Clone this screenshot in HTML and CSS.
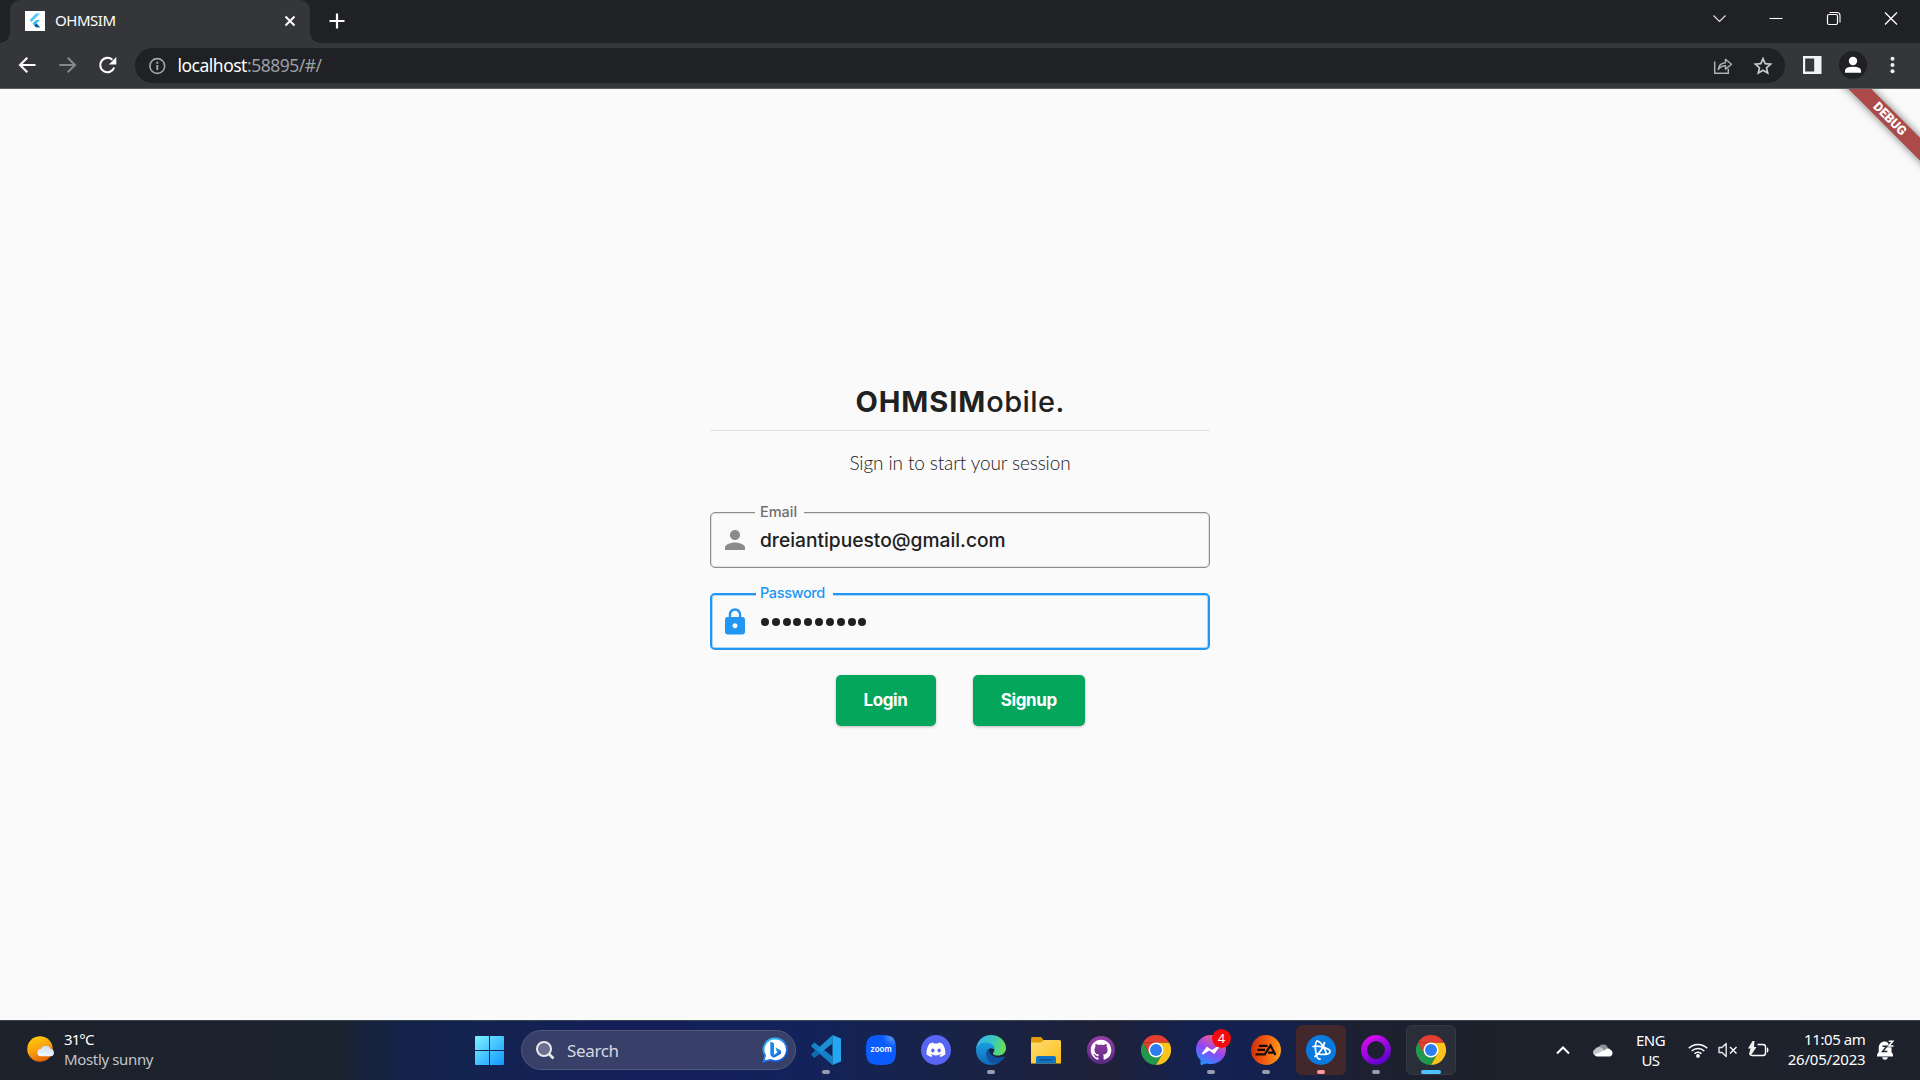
FILE: index.html
```html
<!DOCTYPE html>
<html lang="en">
<head>
<meta charset="utf-8">
<title>OHMSIM</title>
<link rel="stylesheet" href="styles.css">
</head>
<body>
<header class="tabstrip">
  <div class="tab">
    <svg class="favicon" width="20" height="20" viewBox="0 0 20 20"><rect width="20" height="20" fill="#fff"/><path d="M11 2.600h4L6.600 11 4.600 9z" fill="#54c5f8"/><path d="M11 9h4l-3.600 3.600L15 16.300h-4L7.400 12.600z" fill="#40b8f2"/><path d="M9.400 14.600l2-2L15 16.300h-4z" fill="#01579b"/></svg>
    <span class="tab-title">OHMSIM</span>
    <svg class="tab-close" width="12" height="12" viewBox="0 0 12 12"><path d="M1.500 1.500l9 9m0-9l-9 9" stroke="#fff" stroke-width="2"/></svg>
  </div>
  <svg class="new-tab" width="16" height="16" viewBox="0 0 16 16"><path d="M8 .5v15M.5 8h15" stroke="#fff" stroke-width="2.200"/></svg>
  <div class="window-buttons">
    <svg width="57" height="36" viewBox="0 0 57 36"><path d="M21.500 15.500l6 6 6-6" fill="none" stroke="#e8e8e8" stroke-width="1.100"/></svg>
    <svg width="57" height="36" viewBox="0 0 57 36"><path d="M20.500 18.500h13" stroke="#fff" stroke-width="1.100"/></svg>
    <svg width="57" height="36" viewBox="0 0 57 36"><rect x="21.500" y="14.500" width="10" height="10" rx="1.500" fill="none" stroke="#fff" stroke-width="1.200"/><path d="M23.500 12.500h7.500q3 0 3 3V22.500" fill="none" stroke="#fff" stroke-width="1.100"/></svg>
    <svg width="57" height="36" viewBox="0 0 57 36"><path d="M22 12.500l12 12m0-12l-12 12" stroke="#fff" stroke-width="1.300"/></svg>
  </div>
</header>
<nav class="toolbar">
  <svg width="40" height="40" viewBox="0 0 40 40"><path d="M28.500 20H13M20.300 12.800L13 20l7.300 7.200" fill="none" stroke="#fff" stroke-width="2.100"/></svg>
  <svg width="40" height="40" viewBox="0 0 40 40"><path d="M12.500 20H28M20.700 12.800L28 20l-7.300 7.200" fill="none" stroke="#87888b" stroke-width="2.100"/></svg>
  <svg width="40" height="40" viewBox="0 0 40 40"><path d="M27.200 22.500A7.200 7.200 0 1 1 25.400 14.800" fill="none" stroke="#fff" stroke-width="2.100"/><path d="M29.300 12v7.400h-7.400z" fill="#fff"/></svg>
  <div class="omnibox">
    <svg width="18" height="18" viewBox="0 0 18 18"><circle cx="9.300" cy="9" r="7.400" fill="none" stroke="#a5a7aa" stroke-width="1.600"/><path d="M9.300 8v5M9.300 4.700v2" stroke="#a5a7aa" stroke-width="1.900"/></svg>
    <span class="url">localhost<span class="url-rest">:58895/#/</span></span>
    <svg class="share" width="20" height="18" viewBox="0 0 20 18"><path d="M1.700 4.500v11.800h13.600v-4.500" fill="none" stroke="#aeb0b3" stroke-width="1.500"/><path d="M5.200 12.500c.5-4.200 2.800-6.500 7.300-6.800V2.200l6 5-6 4.900V8.800c-3.400 0-5.300 1.200-7.300 3.700z" fill="none" stroke="#aeb0b3" stroke-width="1.400" stroke-linejoin="round"/></svg>
    <svg class="star" width="20" height="20" viewBox="0 0 20 20"><path d="M10 2.700l2.200 5 5.400.5-4.100 3.600 1.200 5.300L10 14.300l-4.700 2.800 1.200-5.300-4.100-3.600 5.400-.5z" fill="none" stroke="#c8c9cb" stroke-width="1.700"/></svg>
  </div>
  <div class="toolbar-end">
    <svg width="40" height="40" viewBox="0 0 40 40"><rect x="11" y="11" width="18.500" height="18" fill="#f1f3f4"/><rect x="13.200" y="13.500" width="9" height="13" fill="#35363a"/></svg>
    <svg width="40" height="40" viewBox="0 0 40 40"><circle cx="21" cy="20" r="14" fill="#202124"/><circle cx="21" cy="16" r="4.200" fill="#fff"/><path d="M13 27.800v-2q0-4 8-4t8 4v2z" fill="#fff"/></svg>
    <svg width="40" height="40" viewBox="0 0 40 40"><g fill="#f1f3f4"><circle cx="20.500" cy="13.800" r="2"/><circle cx="20.500" cy="20" r="2"/><circle cx="20.500" cy="26.200" r="2"/></g></svg>
  </div>
</nav>
<main class="page">
  <div class="debug-banner">DEBUG</div>
  <form class="login">
    <h1 class="brand"><b class="brand-strong">OHMSIM</b>obile.</h1>
    <p class="hint">Sign in to start your session</p>
    <div class="field">
      <label class="field-label">Email</label>
      <svg width="30" height="30" viewBox="0 0 24 24"><path d="M12 12c2.210 0 4-1.790 4-4s-1.790-4-4-4-4 1.790-4 4 1.790 4 4 4zm0 2c-2.670 0-8 1.340-8 4v2h16v-2c0-2.660-5.330-4-8-4z" fill="#8b8b8b"/></svg>
      <span class="value">dreiantipuesto@gmail.com</span>
    </div>
    <div class="field focused">
      <label class="field-label">Password</label>
      <svg width="30" height="30" viewBox="0 0 24 24"><path d="M18 8h-1V6c0-2.760-2.240-5-5-5S7 3.240 7 6v2H6c-1.100 0-2 .9-2 2v10c0 1.100.9 2 2 2h12c1.100 0 2-.9 2-2V10c0-1.100-.9-2-2-2zm-6 9c-1.100 0-2-.9-2-2s.9-2 2-2 2 .9 2 2-.9 2-2 2zm3.100-9H8.900V6c0-1.710 1.390-3.100 3.100-3.100s3.100 1.390 3.100 3.100v2z" fill="#2196f3"/></svg>
      <span class="dots"><i></i><i></i><i></i><i></i><i></i><i></i><i></i><i></i><i></i><i></i></span>
    </div>
    <div class="actions">
      <button type="button" class="btn login-btn">Login</button>
      <button type="button" class="btn signup-btn">Signup</button>
    </div>
  </form>
</main>
<footer class="taskbar">
  <div class="weather">
    <svg width="30" height="30" viewBox="0 0 30 30"><defs><linearGradient id="sun" x1=".3" y1="0" x2=".7" y2="1"><stop offset="0" stop-color="#ffcb08"/><stop offset=".5" stop-color="#f99d10"/><stop offset="1" stop-color="#e25b06"/></linearGradient><linearGradient id="cl" x1="0" y1="0" x2="0" y2="1"><stop offset="0" stop-color="#c9defa"/><stop offset="1" stop-color="#f4f7ff"/></linearGradient></defs><circle cx="13" cy="14" r="12.800" fill="url(#sun)"/><path d="M14 21.300a3.600 3.600 0 0 1 0-7.200 5.200 5.200 0 0 1 9.700 0 3.700 3.700 0 0 1 .6 7.200z" fill="url(#cl)"/></svg>
    <div class="weather-text"><span class="temp">31°C</span><br><span class="sky">Mostly sunny</span></div>
  </div>
  <div class="apps">
    <svg class="start" width="29" height="29" viewBox="0 0 29 29"><defs><linearGradient id="win" gradientUnits="userSpaceOnUse" x1="0" y1="0" x2="29" y2="29"><stop offset="0" stop-color="#7df2ff"/><stop offset="1" stop-color="#0f97ff"/></linearGradient></defs><path d="M1 0h13v14H0V1q0-1 1-1zM15 0h13q1 0 1 1v13H15zM0 15h14v14H1q-1 0-1-1zM15 15h14v13q0 1-1 1H15z" fill="url(#win)"/></svg>
    <div class="search">
      <svg width="20" height="20" viewBox="0 0 20 20"><circle cx="9" cy="9" r="7" fill="#6a7090" stroke="#e8e9ee" stroke-width="2"/><path d="M14 14l4.500 4.500" stroke="#e8e9ee" stroke-width="2.600"/></svg>
      <span class="search-text">Search</span>
      <svg width="26" height="26" viewBox="0 0 26 26"><defs><linearGradient id="bing" x1="0" y1="0" x2=".6" y2="1"><stop offset="0" stop-color="#31c5f5"/><stop offset="1" stop-color="#1658dd"/></linearGradient></defs><path d="M13.500 1.500a11.300 11.300 0 1 1-5 21.400L1.500 24.500l1.600-6A11.300 11.300 0 0 1 13.500 1.500z" fill="#fff" stroke="url(#bing)" stroke-width="1.900"/><path d="M8.300 5.500Q8.300 4.500 9.300 5L12 6.300v12l-1.800 1.200q-1.900-.3-1.900-2.500z" fill="#1c86e8"/><path d="M13.500 10.500l4.500 2.200q2 1.300 1 4l-6 3.500q-2 .8-3.500-.5l6-4.500-1-1.300z" fill="url(#bing)"/></svg>
    </div>
    <div class="slot running"><svg width="30" height="30" viewBox="0 0 30 30"><path d="M.4 10.500L3.300 7.200 21.500 21.500V30L.4 11.800z" fill="#1580c8"/><path d="M.3 19.500L21.500 0v8.500L3.300 22.800z" fill="#1a8fd6"/><path d="M.2 19.300l5-4.600 4.500 3.200-6.400 4.900z" fill="#0f6ab0"/><path d="M21.500 0L30 3.500v23L21.500 30z" fill="#25a7f0"/></svg></div>
    <div class="slot"><svg width="30" height="30" viewBox="0 0 30 30"><defs><radialGradient id="zm" cx=".9" cy=".05" r="1"><stop offset="0" stop-color="#5f9cff"/><stop offset=".35" stop-color="#0b5cff"/><stop offset="1" stop-color="#0b5cff"/></radialGradient></defs><path d="M15 0C27 0 30 3 30 15S27 30 15 30 0 27 0 15 3 0 15 0z" fill="url(#zm)"/><text x="15" y="17.200" class="zoom-word" text-anchor="middle" textLength="21.500" lengthAdjust="spacingAndGlyphs">zoom</text></svg></div>
    <div class="slot"><svg width="30" height="30" viewBox="0 0 30 30"><circle cx="15" cy="15" r="15" fill="#5865f2"/><path transform="translate(5.500 6.100) scale(.79)" fill="#fff" d="M20.317 3.370a19.800 19.800 0 0 0-4.885-1.515.074.074 0 0 0-.079.037c-.21.375-.444.864-.608 1.250a18.270 18.270 0 0 0-5.487 0 12.640 12.640 0 0 0-.617-1.250.077.077 0 0 0-.079-.037A19.740 19.740 0 0 0 3.677 3.370a.07.07 0 0 0-.032.027C.533 8.046-.32 12.580.099 17.058a.082.082 0 0 0 .031.057 19.900 19.900 0 0 0 5.993 3.030.078.078 0 0 0 .084-.028c.462-.63.874-1.295 1.226-1.994a.076.076 0 0 0-.041-.106 13.100 13.100 0 0 1-1.872-.892l.375-.4c3.928 1.793 8.180 1.793 12.061 0l.4.400a12.300 12.300 0 0 1-1.873.892.077.077 0 0 0-.041.107c.36.698.772 1.362 1.225 1.993a.076.076 0 0 0 .084.028 19.840 19.840 0 0 0 6.002-3.030.077.077 0 0 0 .032-.054c.5-5.177-.838-9.674-3.549-13.660a.061.061 0 0 0-.031-.028zM8.020 14.330c-1.183 0-2.157-1.085-2.157-2.419 0-1.333.956-2.419 2.157-2.419 1.210 0 2.176 1.096 2.157 2.420 0 1.333-.956 2.418-2.157 2.418zm7.975 0c-1.183 0-2.157-1.085-2.157-2.419 0-1.333.955-2.419 2.157-2.419 1.210 0 2.176 1.096 2.157 2.420 0 1.333-.946 2.418-2.157 2.418z"/></svg></div>
    <div class="slot running"><svg width="30" height="30" viewBox="0 0 30 30"><defs><linearGradient id="eg" x1="0" y1=".4" x2="1" y2=".6"><stop offset="0" stop-color="#35b4ef"/><stop offset=".5" stop-color="#36c6c4"/><stop offset="1" stop-color="#6be24e"/></linearGradient><linearGradient id="eb" x1="0" y1="0" x2="0" y2="1"><stop offset="0" stop-color="#1b9de2"/><stop offset="1" stop-color="#1267b8"/></linearGradient></defs><path d="M0 14.500C.5 6 7 0 15 0c9 0 15 6.500 15 13 0 5-4 7.500-8 7.500s-5.500-1.500-5-2.500c1.500-1.500 2-4.500 0-7-4-5-13-3.500-17 3.500z" fill="url(#eg)"/><path d="M0 15C1 10 5 7.500 9.500 7.500c5 0 9 3.500 8.800 7.500-1-2.500-6-3-7 2C10 23 17 29 24 27c-2.500 2-5.500 3-9 3C6.500 30 0 23.500 0 15z" fill="url(#eb)"/><path d="M12.500 13.500C9 17 9 24 15.500 28c3 1.500 9 .5 13-5.500.5-.8-.2-1.300-.9-.9C22 24.500 13 21 12.500 13.500z" fill="#10529f"/></svg></div>
    <div class="slot"><svg width="30" height="30" viewBox="0 0 30 30"><defs><linearGradient id="fo" x1="0" y1="0" x2="1" y2="1"><stop offset="0" stop-color="#ffdc75"/><stop offset="1" stop-color="#fcbf18"/></linearGradient></defs><path d="M0 3.500Q0 2 1.500 2H10l3 3.500-3 4H0z" fill="#e29d06"/><path d="M0 7.500h10L13 5h15.500Q30 5 30 6.500V28.500H0z" fill="url(#fo)"/><path d="M5 28.500V23q0-2 2-2h16q2 0 2 2v5.500z" fill="#0f74c4"/><path d="M8.500 24.800h13" stroke="#0a4c8c" stroke-width="1.300"/></svg></div>
    <div class="slot"><svg width="30" height="30" viewBox="0 0 30 30"><defs><linearGradient id="gh" x1="0" y1="0" x2="0" y2="1"><stop offset="0" stop-color="#973ea8"/><stop offset="1" stop-color="#5b2a85"/></linearGradient></defs><circle cx="15" cy="15" r="14" fill="url(#gh)"/><path transform="translate(4.700 4.700) scale(1.290)" fill="#fff" d="M8 0C3.580 0 0 3.580 0 8c0 3.540 2.290 6.530 5.470 7.590.4.070.55-.17.55-.38 0-.19-.01-.82-.01-1.490-2.010.37-2.530-.49-2.690-.94-.09-.23-.48-.94-.82-1.130-.28-.15-.68-.52-.01-.53.63-.01 1.080.58 1.230.82.72 1.210 1.870.87 2.330.66.070-.52.28-.87.51-1.070-1.780-.2-3.640-.89-3.640-3.950 0-.87.31-1.590.82-2.150-.08-.2-.36-1.020.08-2.120 0 0 .67-.21 2.200.82.64-.18 1.320-.27 2-.27s1.360.09 2 .27c1.530-1.040 2.200-.82 2.200-.82.44 1.100.16 1.920.08 2.120.51.56.82 1.270.82 2.150 0 3.070-1.870 3.750-3.650 3.950.29.25.54.73.54 1.480 0 1.070-.01 1.930-.01 2.200 0 .21.15.46.55.38A8.010 8.010 0 0 0 16 8c0-4.420-3.580-8-8-8z"/></svg></div>
    <div class="slot"><svg width="30" height="30" viewBox="0 0 30 30"><g id="chrome"><path d="M2 7.500A15 15 0 0 0 15 30L21.500 18.700 15 15 8.500 18.700z" fill="#23984c"/><path d="M28 7.500A15 15 0 0 1 15 30L21.500 18.700 15 7.500z" fill="#fbc31c"/><path d="M15 7.500H28L2 7.500l6.500 11.200z" fill="#e33e2f"/><path d="M2 7.500A15 15 0 0 1 28 7.500H15z" fill="#e33e2f"/><circle cx="15" cy="15" r="7.500" fill="#fff"/><circle cx="15" cy="15" r="6" fill="#2c7df0"/></g></svg></div>
    <div class="slot running"><svg width="30" height="30" viewBox="0 0 30 30"><defs><linearGradient id="ms" x1=".2" y1="1" x2=".7" y2="0"><stop offset="0" stop-color="#1897ff"/><stop offset=".5" stop-color="#9146f5"/><stop offset="1" stop-color="#f8647c"/></linearGradient></defs><path d="M15 0c8.500 0 15 6.200 15 14.300S23.500 29 15 29c-1.500 0-3-.2-4.300-.6L5.500 30q-1 0-1-1V25C1.800 22.500 0 18.800 0 14.500 0 6.200 6.500 0 15 0z" fill="url(#ms)"/><path d="M5.800 18.500l5-7 5 3.500 6-3.800 1.500 1-5 6.800-5-3.600-6.200 4.200z" fill="#fff"/></svg><span class="badge">4</span></div>
    <div class="slot running"><svg width="30" height="30" viewBox="0 0 30 30"><defs><linearGradient id="ea" x1="0" y1=".7" x2="1" y2=".8"><stop offset="0" stop-color="#d1310b"/><stop offset=".5" stop-color="#f4610f"/><stop offset="1" stop-color="#ffa11d"/></linearGradient></defs><circle cx="15" cy="15" r="15" fill="url(#ea)"/><path d="M8 10.800h8.500M6.500 14.800H14M4.500 19.300h9.300L19.500 10.500l5 9.500M17 17.700h5.500" fill="none" stroke="#160b08" stroke-width="2.200"/></svg></div>
    <div class="slot running alert"><svg width="30" height="30" viewBox="0 0 30 30"><circle cx="15" cy="15" r="15" fill="#0a7ae0"/><g fill="none" stroke="#fff" stroke-width="1.700" stroke-linecap="round"><path d="M11 6c-2.500 2.500-2 10 0 15.500.7 1.800 1.800 3 3 2.500"/><path d="M11 6c3 0 7.500 6 9.500 13"/><path d="M7 11.500c5-.8 11 .3 15 2.500 2.800 1.700 2.700 3.700.3 4.600-3 1-7 1-10.500.2"/><path d="M18.500 7.500c-1 5-5 10.500-9.500 14"/></g></svg></div>
    <div class="slot running"><svg width="30" height="30" viewBox="0 0 30 30"><defs><linearGradient id="op" x1=".2" y1="0" x2=".8" y2="1"><stop offset="0" stop-color="#d30bf0"/><stop offset="1" stop-color="#5c05c9"/></linearGradient></defs><circle cx="15" cy="15" r="11.900" fill="none" stroke="url(#op)" stroke-width="6"/></svg></div>
    <div class="slot running active"><svg width="30" height="30" viewBox="0 0 30 30"><use href="#chrome"/></svg></div>
  </div>
  <div class="tray">
    <svg class="more" width="14" height="10" viewBox="0 0 14 10"><path d="M1 8.500l6-6 6 6" fill="none" stroke="#fff" stroke-width="2"/></svg>
    <svg class="cloud" width="20" height="14" viewBox="0 0 20 14"><path d="M5.500 4.500a5 5 0 0 1 9.500.8l-4 4z" fill="#8e9095"/><path d="M3.500 13A3.600 3.600 0 0 1 2 6.200C4 3 8 3.500 10 6l4 7z" fill="#c5c6c9"/><path d="M2 11.500L12 7c2.500-2.500 5-1.500 5.500 0 2.500.5 3 5-.5 6.500H4Q2 13.500 2 11.500z" fill="#fff"/></svg>
    <div class="lang">ENG<br>US</div>
    <svg class="wifi" width="20" height="16" viewBox="0 0 20 16"><g fill="none" stroke="#fff" stroke-width="1.500"><path d="M.8 6.200a13 13 0 0 1 18.400 0"/><path d="M3.700 9a9 9 0 0 1 12.600 0"/><path d="M6.500 11.800a5 5 0 0 1 7 0"/></g><circle cx="10" cy="13.900" r="1.900" fill="#fff"/></svg>
    <svg class="sound" width="20" height="16" viewBox="0 0 20 16"><path d="M1 5.500h3L8.200 1.500v13L4 10.500H1z" fill="none" stroke="#e4e5e7" stroke-width="1.400" stroke-linejoin="round"/><path d="M12 5l6.500 6.500m0-6.500L12 11.500" stroke="#fff" stroke-width="1.400"/></svg>
    <svg class="battery" width="21" height="18" viewBox="0 0 21 18"><path d="M9.500 3.500H15q2.500 0 2.500 2.500v6q0 2.500-2.500 2.500H4.500Q2 14.500 2 12" fill="none" stroke="#fff" stroke-width="1.400"/><path d="M18.800 6.500h.7q1 1 1 2.500t-1 2.500h-.7z" fill="#fff"/><path d="M4.500 0L0 7.500h2.500L1 13.500h2.500L8.500 6H6L6.500 0z" fill="#f0f0f0"/></svg>
    <div class="clock"><span class="time">11:05 am</span><br><span class="date">26/05/2023</span></div>
    <svg class="bell" width="18" height="20" viewBox="0 0 18 20"><path d="M8 1.500c-3.800 0-6.300 2.700-6.300 6V12L0 14.500v2h16v-2L14.500 12V7L10 2z" fill="#fff"/><path d="M5 17.300h6q-.7 2.500-3 2.500T5 17.300z" fill="#fff"/><path d="M5.500 6.300h4.300L5.500 11.500h4.800" fill="none" stroke="#1d222c" stroke-width="1.400"/><path d="M11.800 1.200h4l-4 4.800h4.700" fill="none" stroke="#1d222c" stroke-width="2.400"/><path d="M11.800 1.200h4l-4 4.800h4.700" fill="none" stroke="#fff" stroke-width="1.500"/></svg>
  </div>
</footer>
</body>
</html>
```
FILE: styles.css
```css
* { box-sizing: border-box; }

body {
  margin: 0;
  width: 1920px;
  height: 1080px;
  overflow: hidden;
  display: flex;
  flex-direction: column;
  background: #fafafa;
  font-family: "Noto Sans", "Open Sans", sans-serif;
  white-space: nowrap;
}

svg { display: block; flex: none; }

/* Browser frame */
.tabstrip {
  height: 43px;
  flex: none;
  display: flex;
  padding-left: 10px;
  background: #202124;
  color: #fff;
}
.tab {
  position: relative;
  width: 300px;
  height: 43px;
  padding: 0 14px 0 15px;
  display: flex;
  align-items: center;
  background: #35363a;
  border-radius: 10px 10px 0 0;
  font-size: 15px;
  line-height: 41px;
}
.tab::before,
.tab::after {
  content: "";
  position: absolute;
  bottom: 0;
  width: 10px;
  height: 10px;
}
.tab::before { left: -10px; background: radial-gradient(circle at 0 0, transparent 9.5px, #35363a 10px); }
.tab::after { right: -10px; background: radial-gradient(circle at 100% 0, transparent 9.5px, #35363a 10px); }
.favicon, .tab-close { margin-bottom: 1px; }
.tab-title { flex: 1; margin-left: 10px; height: 43px; letter-spacing: -.45px; }
.new-tab { margin: 13px 0 0 19px; }
.window-buttons { display: flex; margin-left: auto; }

.toolbar {
  height: 46px;
  flex: none;
  display: flex;
  align-items: flex-start;
  padding: 2px 7px 0 7px;
  background: #35363a;
  border-bottom: 1px solid #5c5d60;
}
.omnibox {
  width: 1650px;
  height: 35px;
  margin: 3px 0 0 8px;
  padding: 0 12px 0 13px;
  display: flex;
  align-items: center;
  background: #202124;
  border-radius: 18px;
  color: #fff;
}
.url { flex: 1; margin-left: 11.5px; font-size: 17.5px; line-height: 32px; height: 34px; letter-spacing: -.5px; }
.url-rest { color: #9aa0a6; }
.share { margin-right: 20px; }
.toolbar-end { display: flex; margin-left: 7px; }

/* Page */
.page {
  position: relative;
  height: 931px;
  flex: none;
  overflow: hidden;
  display: flex;
  justify-content: center;
  font-family: Inter, "Liberation Sans", sans-serif;
  color: #212121;
}
.debug-banner {
  position: absolute;
  right: -30px;
  top: 22px;
  width: 120px;
  height: 15.5px;
  transform: rotate(45deg);
  background: #ac4a4a;
  box-shadow: 0 0 8px rgba(0, 0, 0, .55);
  color: #fff;
  font: 900 12.75px/15.5px Roboto, sans-serif;
  text-align: center;
}
.login { width: 500px; padding-top: 293px; }
.brand {
  margin: 0 0 8px;
  height: 40px;
  font-size: 29px;
  font-weight: 500;
  line-height: 40px;
  letter-spacing: .4px;
  text-align: center;
}
.brand-strong { font-weight: 700; letter-spacing: .95px; }
.hint {
  margin: 0 0 37px;
  padding-top: 20px;
  height: 45px;
  border-top: 1px solid #e0e0e0;
  font-family: Lato, Inter, sans-serif;
  font-size: 19px;
  font-weight: 300;
  line-height: 24px;
  letter-spacing: -.12px;
  text-align: center;
}
.field {
  position: relative;
  height: 56px;
  margin-bottom: 25px;
  padding-left: 9px;
  display: flex;
  align-items: center;
  gap: 11px;
  border: 1px solid #8c8c8c;
  border-radius: 5px;
  box-shadow: inset 0 0 0 1px rgba(0, 0, 0, .1);
}
.field-label {
  position: absolute;
  left: 44px;
  top: -11px;
  width: 49px;
  padding-left: 5px;
  background: #fafafa;
  color: #6f6f6f;
  font-size: 14.5px;
  font-weight: 500;
  line-height: 20px;
  letter-spacing: 0;
}
.value { margin-left: -1px; font-size: 19.2px; font-weight: 500; letter-spacing: 0; }
.focused {
  height: 57px;
  margin-bottom: 24.5px;
  padding-left: 8px;
  border: 2px solid #2196f3;
  box-shadow: inset 0 0 0 1px rgba(33, 150, 243, .35);
}
.focused .field-label {
  left: 44px;
  top: -12px;
  width: 77px;
  padding-left: 4px;
  color: #2196f3;
  letter-spacing: -.38px;
}
.dots { display: flex; gap: 2.83px; }
.dots i { width: 8px; height: 8px; border-radius: 50%; background: #212121; }
.actions { display: flex; padding-left: 125.5px; gap: 37.5px; }
.btn {
  height: 51.5px;
  padding: 0;
  border: 0;
  border-radius: 5px;
  background: #04a65b;
  box-shadow: 0 1px 3px rgba(0, 0, 0, .25);
  color: #fff;
  font: 700 17px/51px Inter, sans-serif;
  letter-spacing: -.4px;
}
.login-btn { width: 100px; }
.signup-btn { width: 111.5px; }

/* Taskbar */
.taskbar {
  height: 60px;
  flex: none;
  display: flex;
  border-top: 1px solid #3c4650;
  background: linear-gradient(90deg, #1d222c 0, #1b232e 335px, #17233c 365px, #13234b 410px, #13234f 460px, #151f5a 640px, #13235a 810px, #192346 960px, #1e2138 1110px, #142252 1200px, #14214f 1270px, #1c2030 1360px, #1d212b 1500px, #1d222c 100%);
  color: #fff;
  font-size: 15px;
  line-height: 20px;
}
.weather { width: 475px; display: flex; padding-left: 27px; gap: 7px; }
.weather svg { margin-top: 14px; }
.weather-text { padding-top: 8px; }
.temp { letter-spacing: -.9px; }
.sky { color: #c3c5c9; letter-spacing: -.35px; }
.apps { display: flex; align-items: flex-start; gap: 5px; }
.start { margin: 15px 12px 0 0; }
.search {
  width: 275px;
  height: 40px;
  margin-top: 9px;
  padding: 0 7px 0 13px;
  display: flex;
  align-items: center;
  border: 1px solid #50587e;
  border-radius: 20px;
  background: #384069;
  font-size: 17px;
  letter-spacing: -.35px;
  color: #d7d9e1;
}
.search-text { flex: 1; margin: 1px 0 0 12px; }
.slot {
  position: relative;
  width: 50px;
  height: 50px;
  margin-top: 4px;
  padding: 10px;
  border-radius: 6px;
}
.running::after {
  content: "";
  position: absolute;
  left: 21px;
  bottom: 1px;
  width: 8px;
  height: 4px;
  border-radius: 2px;
  background: #999cae;
}
.alert { background: #43282b; }
.alert::after { background: #ff9aa4; }
.active { background: #2a2e39; border: 1px solid #343843; padding: 9px; }
.active::after { left: 14px; bottom: 0; width: 20px; background: #4cc2ff; }
.badge {
  position: absolute;
  left: 26px;
  top: 4px;
  width: 19px;
  height: 19px;
  border-radius: 50%;
  background: #f50b0b;
  font-size: 13px;
  line-height: 19px;
  text-align: center;
}
.zoom-word { font: 600 8px Inter, sans-serif; fill: #fff; }
.tray { margin-left: auto; display: flex; align-items: center; padding-right: 25px; }
.more { margin-bottom: 1px; }
.cloud { margin: 0 0 1px 23px; }
.lang { width: 40px; margin: 0 0 2px 17.5px; text-align: center; letter-spacing: -.5px; }
.wifi { margin: 0 0 2px 17.5px; }
.sound { margin: 0 0 2px 10px; }
.battery { margin: 0 0 2px 10px; }
.clock { width: 90px; margin: 0 0 3px 6.5px; text-align: right; }
.time { letter-spacing: -.4px; }
.date { letter-spacing: -.2px; }
.bell { margin: 0 0 1px 11.5px; }
```
